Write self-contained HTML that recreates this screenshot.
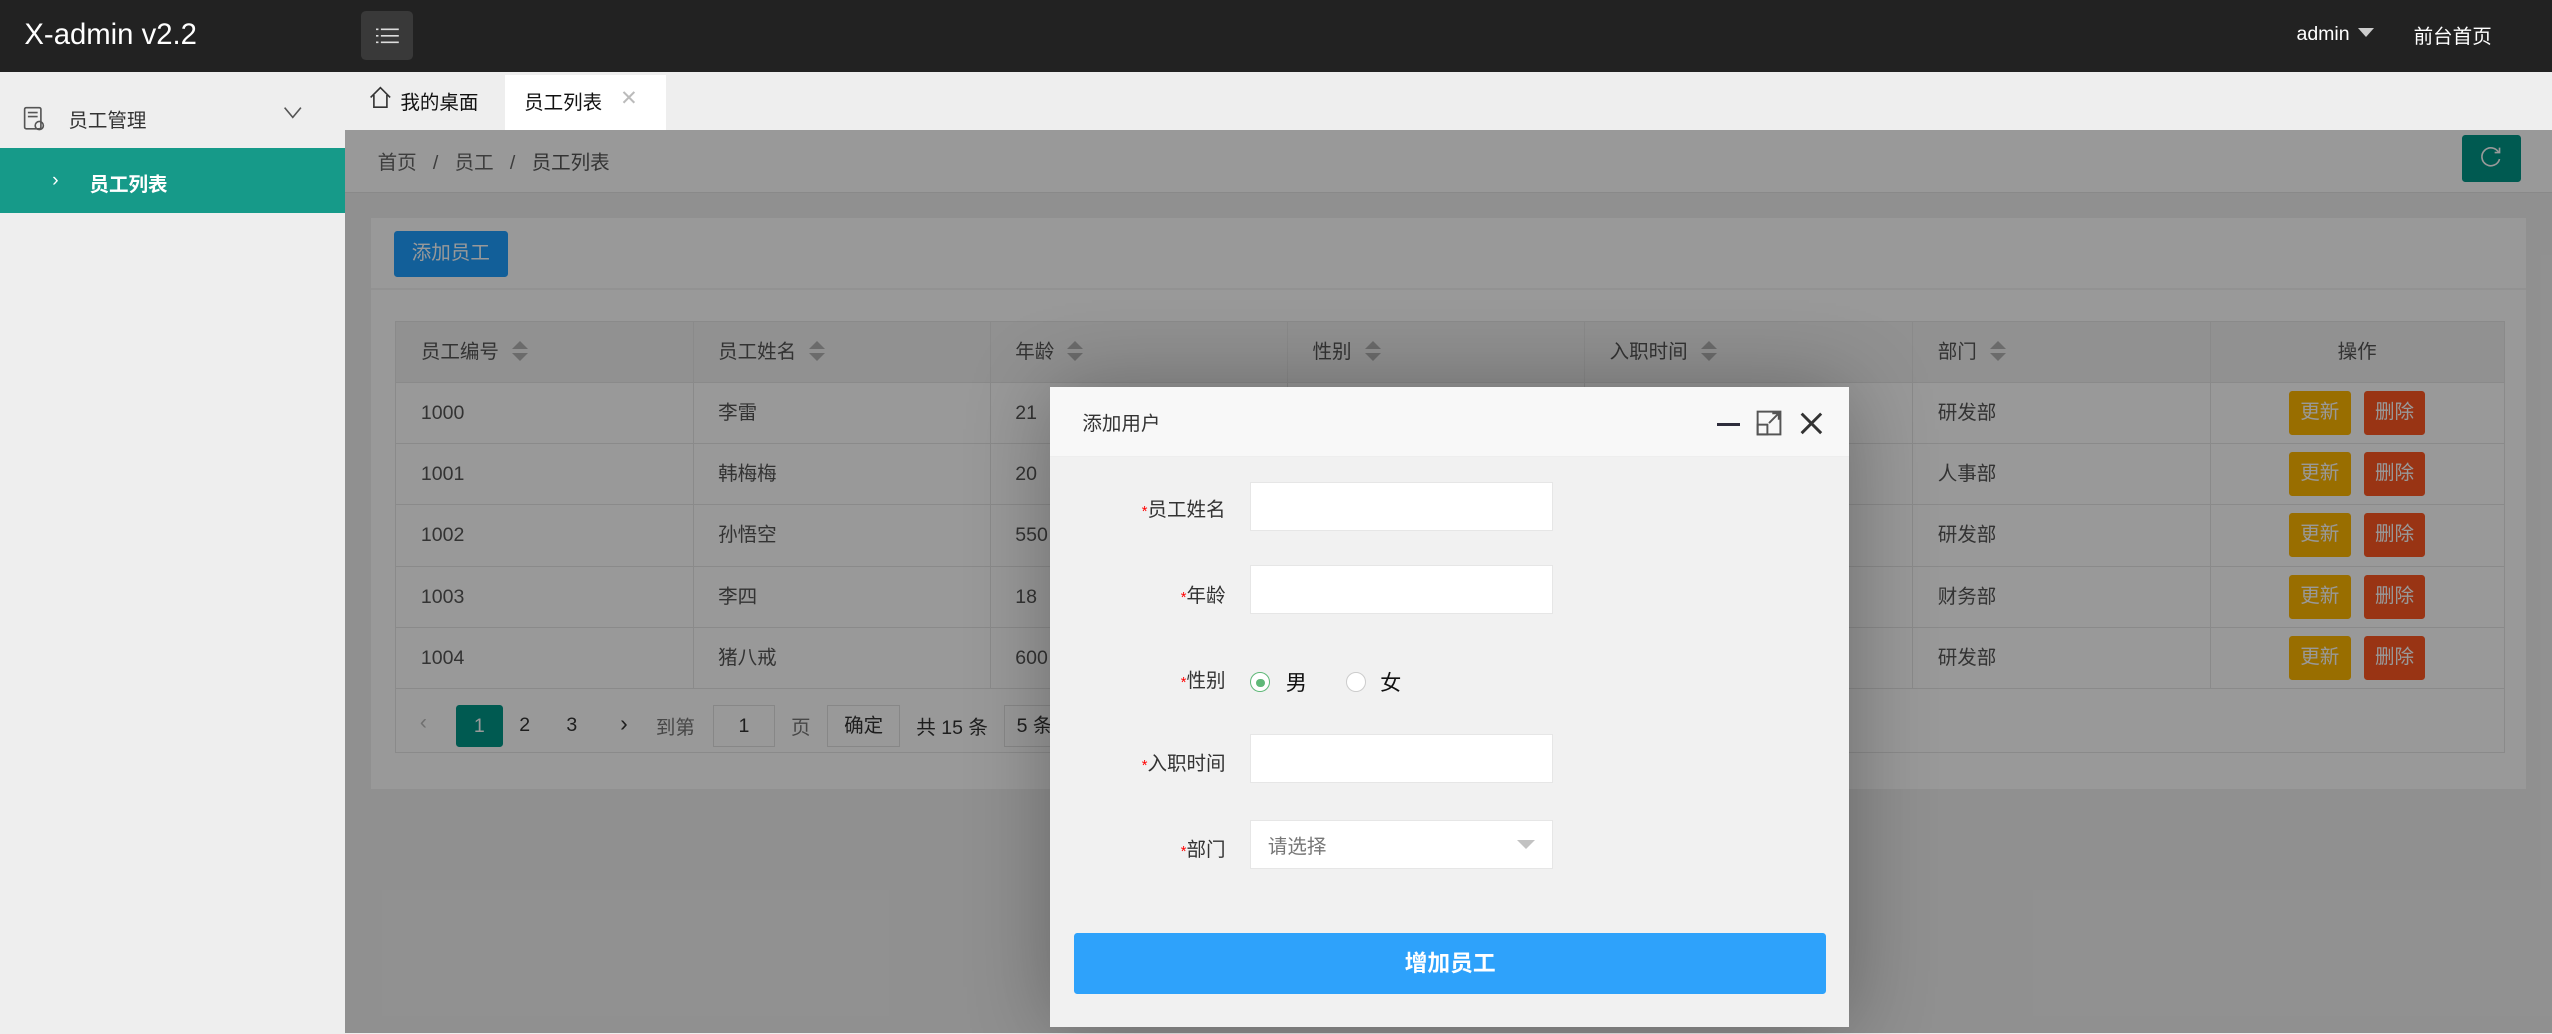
<!DOCTYPE html>
<html><head><meta charset="utf-8">
<style>
html,body{margin:0;padding:0;width:2552px;height:1034px;overflow:hidden;background:#eee}
#root{zoom:1.627551;width:1568px;height:635px;position:relative;font-family:"Liberation Sans","Noto Sans CJK SC",sans-serif;font-size:12px;color:#333}
.a{position:absolute}
.top{left:0;top:0;width:1568px;height:44px;background:#222}
.side{left:0;top:44px;width:212px;height:591px;background:#eee}
.content{left:212px;top:80px;width:1356px;height:555px;background:#f1f1f1}
.shade{left:212px;top:80px;width:1356px;height:555px;background:rgba(0,0,0,0.4)}
table{border-collapse:collapse;position:absolute;left:243px;top:197px;width:1296px;font-size:12px;color:#555}
td,th{border:1px solid #e6e6e6;height:37px;line-height:16px;padding:0 15px;text-align:left;font-weight:normal;vertical-align:middle}
th{background:#f2f2f2}
.sort{display:inline-block;vertical-align:middle;margin-left:8px;width:10px;height:14px;position:relative}
.sort:before{content:"";position:absolute;left:0;top:0;border:5px solid transparent;border-bottom:5px solid #b2b2b2;border-top:none}
.sort:after{content:"";position:absolute;left:0;top:7px;border:5px solid transparent;border-top:5px solid #b2b2b2;border-bottom:none}
.b{display:inline-block;height:27px;line-height:27px;padding:0 7px;color:#fff;font-size:12px;border-radius:2px;margin:0 4px;vertical-align:middle}
.lab{position:absolute;right:0;width:100px;text-align:right;font-size:12px;color:#333}
.lab i{color:#f00;font-style:normal;font-size:9px}
.inp{position:absolute;left:768px;width:185px;height:29px;background:#fff;border:1px solid #e6e6e6}
</style></head><body><div id="root">
<div class="a top"></div>
<div class="a" style="left:15px;top:11px;color:#fff;font-size:18px">X-admin v2.2</div>
<div class="a" style="left:222px;top:7px;width:32px;height:30px;background:#393939;border-radius:3px"></div>
<svg class="a" style="left:231px;top:16px" width="14" height="12"><g stroke="#ddd" stroke-width="1"><path d="M0 2h1.5M3 2h11M0 6h1.5M3 6h11M0 10h1.5M3 10h11"/></g></svg>
<div class="a" style="left:1411px;top:14px;color:#fff;font-size:12px">admin</div>
<div class="a" style="left:1449px;top:17px;border:5px solid transparent;border-top:6px solid #ccc;border-bottom:0"></div>
<div class="a" style="left:1483px;top:12px;color:#fff;font-size:12px">前台首页</div>

<div class="a side"></div>
<svg class="a" style="left:14px;top:65px" width="14" height="16"><g fill="none" stroke="#555" stroke-width="1"><rect x="1" y="1" width="10" height="13" rx="1"/><path d="M3 4h6M3 6.5h6"/><circle cx="10" cy="12" r="2.5"/></g></svg>
<div class="a" style="left:42px;top:64px;font-size:12px;color:#333">员工管理</div>
<svg class="a" style="left:174px;top:65px" width="12" height="9"><path d="M1 1l5 6 5-6" fill="none" stroke="#555"/></svg>
<div class="a" style="left:0;top:91px;width:212px;height:40px;background:#169a89"></div>
<div class="a" style="left:32px;top:104px;color:#fff;font-size:12px">›</div>
<div class="a" style="left:55px;top:103px;color:#fff;font-size:12px;font-weight:bold">员工列表</div>

<svg class="a" style="left:227px;top:53px" width="14" height="14"><path d="M1 7L7 1l6 6M3 5.5V13h8V5.5" fill="none" stroke="#333"/></svg>
<div class="a" style="left:246px;top:53px;font-size:12px;color:#111">我的桌面</div>
<div class="a" style="left:310px;top:46px;width:99px;height:34px;background:#fff"></div>
<div class="a" style="left:322px;top:53px;font-size:12px;color:#111">员工列表</div>
<div class="a" style="left:381px;top:52px;font-size:13px;color:#bbb">✕</div>

<div class="a content"></div>
<div class="a" style="left:212px;top:80px;width:1356px;height:38px;background:#fff;border-bottom:1px solid #e5e5e5"></div>
<div class="a" style="left:232px;top:90px;font-size:12px;color:#666">首页 &nbsp;&nbsp;/&nbsp;&nbsp; 员工 &nbsp;&nbsp;/&nbsp;&nbsp; <span style="color:#555">员工列表</span></div>
<div class="a" style="left:1513px;top:83px;width:36px;height:29px;background:#009688;border-radius:2px"></div>
<svg class="a" style="left:1524px;top:90px" width="14" height="14"><path d="M11.5 4A5.5 5.5 0 1 0 12 8" fill="none" stroke="#fff"/><path d="M9 4h3V1" fill="none" stroke="#fff"/></svg>
<div class="a" style="left:228px;top:134px;width:1324px;height:351px;background:#fff"></div>
<div class="a" style="left:228px;top:177px;width:1324px;height:1px;background:#f3f3f3"></div>
<div class="a" style="left:242px;top:142px;width:70px;height:28px;line-height:28px;text-align:center;background:#1E9FFF;color:#fff;border-radius:2px">添加员工</div>
<table>
<tr><th style="width:152px">员工编号<span class="sort"></span></th><th style="width:152px">员工姓名<span class="sort"></span></th><th style="width:152px">年龄<span class="sort"></span></th><th style="width:152px">性别<span class="sort"></span></th><th style="width:171px">入职时间<span class="sort"></span></th><th style="width:152px">部门<span class="sort"></span></th><th style="text-align:center">操作</th></tr>
<tr><td>1000</td><td>李雷</td><td>21</td><td></td><td></td><td>研发部</td><td style="text-align:center"><span class="b" style="background:#FFB800">更新</span><span class="b" style="background:#FF5722">删除</span></td></tr>
<tr><td>1001</td><td>韩梅梅</td><td>20</td><td></td><td></td><td>人事部</td><td style="text-align:center"><span class="b" style="background:#FFB800">更新</span><span class="b" style="background:#FF5722">删除</span></td></tr>
<tr><td>1002</td><td>孙悟空</td><td>550</td><td></td><td></td><td>研发部</td><td style="text-align:center"><span class="b" style="background:#FFB800">更新</span><span class="b" style="background:#FF5722">删除</span></td></tr>
<tr><td>1003</td><td>李四</td><td>18</td><td></td><td></td><td>财务部</td><td style="text-align:center"><span class="b" style="background:#FFB800">更新</span><span class="b" style="background:#FF5722">删除</span></td></tr>
<tr><td>1004</td><td>猪八戒</td><td>600</td><td></td><td></td><td>研发部</td><td style="text-align:center"><span class="b" style="background:#FFB800">更新</span><span class="b" style="background:#FF5722">删除</span></td></tr>
<tr><td colspan="7" style="height:39px"></td></tr>
</table>
<div class="a" style="left:258px;top:437px;color:#bbb;font-size:13px">‹</div>
<div class="a" style="left:280px;top:433px;width:29px;height:26px;line-height:26px;text-align:center;background:#009688;color:#fff;border-radius:2px">1</div>
<div class="a" style="left:319px;top:439px;color:#333">2</div>
<div class="a" style="left:348px;top:439px;color:#333">3</div>
<div class="a" style="left:381px;top:436px;color:#333;font-size:14px">›</div>
<div class="a" style="left:403px;top:437px;color:#777">到第</div>
<div class="a" style="left:438px;top:433px;width:37px;height:25px;line-height:25px;text-align:center;border:1px solid #e2e2e2;color:#333">1</div>
<div class="a" style="left:486px;top:437px;color:#777">页</div>
<div class="a" style="left:508px;top:433px;width:44px;height:25px;line-height:25px;text-align:center;border:1px solid #e2e2e2;color:#333">确定</div>
<div class="a" style="left:563px;top:437px;color:#333">共 15 条</div>
<div class="a" style="left:617px;top:433px;width:40px;height:25px;line-height:25px;border:1px solid #e2e2e2;color:#333;padding-left:7px">5 条</div>
<div class="a shade"></div>

<div class="a" style="left:645px;top:238px;width:491px;height:393px;background:#f1f1f1;box-shadow:1px 1px 50px rgba(0,0,0,.3)"></div>
<div class="a" style="left:645px;top:238px;width:491px;height:42px;background:#f8f8f8;border-bottom:1px solid #eee"></div>
<div class="a" style="left:665px;top:250px;font-size:12px;color:#333">添加用户</div>
<div class="a" style="left:1055px;top:260px;width:14px;height:2px;background:#2e2d3c"></div>
<svg class="a" style="left:1079px;top:252px" width="16" height="16"><g fill="none" stroke="#555" stroke-width="1.2"><rect x="1" y="1" width="14" height="14"/><rect x="1" y="9" width="6" height="6"/><path d="M8 8l6-6M10 2h4v4"/></g></svg>
<svg class="a" style="left:1106px;top:253px" width="14" height="14"><path d="M1 1l12 12M13 1L1 13" stroke="#333" stroke-width="1.8"/></svg>
<div class="a" style="left:653px;top:303px;width:100px;height:20px"><div class="lab"><i>*</i>员工姓名</div></div>
<div class="a" style="left:653px;top:356px;width:100px;height:20px"><div class="lab"><i>*</i>年龄</div></div>
<div class="a" style="left:653px;top:408px;width:100px;height:20px"><div class="lab"><i>*</i>性别</div></div>
<div class="a" style="left:653px;top:459px;width:100px;height:20px"><div class="lab"><i>*</i>入职时间</div></div>
<div class="a" style="left:653px;top:512px;width:100px;height:20px"><div class="lab"><i>*</i>部门</div></div>
<div class="inp" style="top:296px"></div>
<div class="inp" style="top:347px"></div>
<div class="inp" style="top:451px"></div>
<div class="inp" style="top:504px"></div>
<div class="a" style="left:779px;top:510px;color:#777;font-size:12px">请选择</div>
<div class="a" style="left:932px;top:516px;border:6px solid transparent;border-top:6px solid #c2c2c2;border-bottom:0"></div>
<div class="a" style="left:768px;top:413px;width:11px;height:11px;border:1px solid #5FB878;border-radius:50%;background:#fff"></div>
<div class="a" style="left:772px;top:417px;width:5px;height:5px;border-radius:50%;background:#5FB878"></div>
<div class="a" style="left:790px;top:409px;font-size:13px;color:#111">男</div>
<div class="a" style="left:827px;top:413px;width:11px;height:11px;border:1px solid #ccc;border-radius:50%;background:#fff"></div>
<div class="a" style="left:848px;top:409px;font-size:13px;color:#111">女</div>
<div class="a" style="left:660px;top:573px;width:462px;height:38px;line-height:38px;text-align:center;background:#2ea2fb;color:#fff;font-size:14px;font-weight:bold;border-radius:2px">增加员工</div>
</div></body></html>
